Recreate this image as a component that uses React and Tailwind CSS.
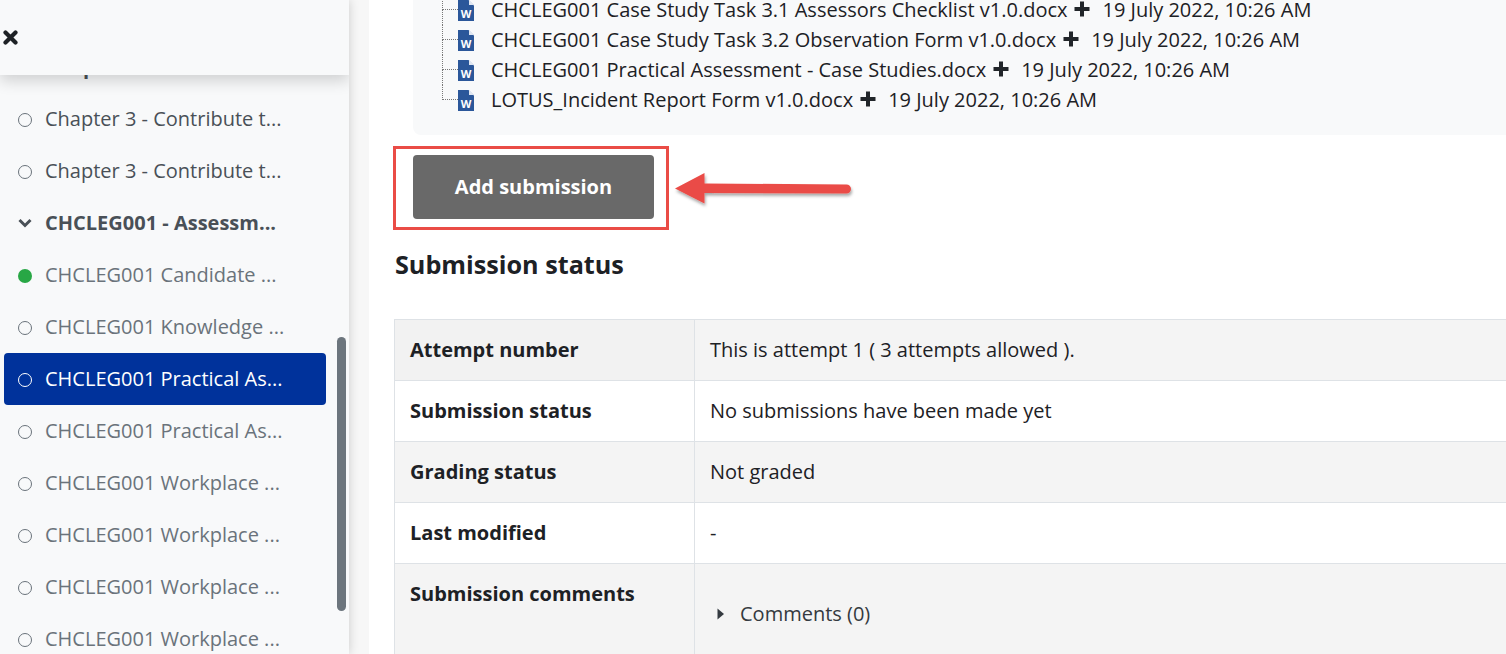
const font = { fontFamily: '"Open Sans", sans-serif' }

const sidebarItems = [
  { label: 'Chapter 3 - Contribute t...', kind: 'hidden' },
  { label: 'Chapter 3 - Contribute t...', kind: 'dark' },
  { label: 'Chapter 3 - Contribute t...', kind: 'dark' },
  { label: 'CHCLEG001 - Assessm...', kind: 'section' },
  { label: 'CHCLEG001 Candidate ...', kind: 'done' },
  { label: 'CHCLEG001 Knowledge ...', kind: 'muted' },
  { label: 'CHCLEG001 Practical As...', kind: 'active' },
  { label: 'CHCLEG001 Practical As...', kind: 'muted' },
  { label: 'CHCLEG001 Workplace ...', kind: 'muted' },
  { label: 'CHCLEG001 Workplace ...', kind: 'muted' },
  { label: 'CHCLEG001 Workplace ...', kind: 'muted' },
  { label: 'CHCLEG001 Workplace ...', kind: 'muted' }
]

const files = [
  { name: 'CHCLEG001 Case Study Task 3.1 Assessors Checklist v1.0.docx' },
  { name: 'CHCLEG001 Case Study Task 3.2 Observation Form v1.0.docx' },
  { name: 'CHCLEG001 Practical Assessment - Case Studies.docx' },
  { name: 'LOTUS_Incident Report Form v1.0.docx', last: true }
]

const statusRows = [
  { label: 'Attempt number', value: 'This is attempt 1 ( 3 attempts allowed ).', bg: 'bg-[#f2f2f2]', valueBg: 'bg-[#f4f4f4]' },
  { label: 'Submission status', value: 'No submissions have been made yet', bg: 'bg-white', valueBg: 'bg-white' },
  { label: 'Grading status', value: 'Not graded', bg: 'bg-[#f4f4f4]', valueBg: 'bg-[#f4f4f4]' },
  { label: 'Last modified', value: '-', bg: 'bg-white', valueBg: 'bg-white' }
]

const ItemIcon = ({ kind }) => {
  if (kind === 'section' || kind === 'hidden') {
    return (
      <svg width="14" height="10" viewBox="0 0 14 10" className="w-[14px] shrink-0">
        <path d="M1.5 2 L7 7.5 L12.5 2" fill="none" stroke="#495057" strokeWidth="3" />
      </svg>
    )
  }
  if (kind === 'done') return <span className="w-[14px] h-[14px] mt-[2px] rounded-full bg-[#28a745] shrink-0" />
  return (
    <span
      className={`w-[14px] h-[14px] mt-[2px] rounded-full border-[1.5px] shrink-0 ${
        kind === 'active' ? 'border-white' : 'border-[#6a737b]'
      }`}
    />
  )
}

const SidebarRow = ({ label, kind }) => {
  const styles = {
    hidden: 'text-[#495057] font-bold',
    dark: 'text-[#495057]',
    section: 'text-[#495057] font-bold',
    done: 'text-[#6a737b]',
    muted: 'text-[#6a737b]',
    active: 'text-white bg-[#00329b] rounded-[4px]'
  }
  return (
    <div className={`flex items-center gap-[13px] h-[52px] w-[322px] ml-1 pl-[14px] text-[20px] whitespace-nowrap ${styles[kind]}`}>
      <ItemIcon kind={kind} />
      <span className="-mt-[1px]">{label}</span>
    </div>
  )
}

const WordIcon = () => (
  <svg width="16" height="21" viewBox="0 0 16 21" className="shrink-0">
    <path d="M0 0 H10.5 L16 5.5 V21 H0 Z" fill="#2b579a" />
    <path d="M11 0 L16 5 H11 Z" fill="#dfe6f1" />
    <text x="8" y="18" textAnchor="middle" fontSize="11" fontWeight="700" fill="#ffffff" fontFamily="Open Sans, sans-serif">
      W
    </text>
  </svg>
)

const PlusIcon = () => (
  <svg width="16" height="16" viewBox="0 0 16 16" className="block shrink-0">
    <path d="M6 0.5 H10 V6 H15.5 V10 H10 V15.5 H6 V10 H0.5 V6 H6 Z" fill="#212529" />
  </svg>
)

const FileRow = ({ name, last }) => (
  <div className="flex items-center h-[30px] whitespace-nowrap leading-[20px]">
    <div className="flex flex-col w-[16px] h-full shrink-0">
      <div className="h-[15px] border-l border-b border-dotted border-[#777]" />
      {!last && <div className="h-[15px] border-l border-dotted border-[#777]" />}
    </div>
    <WordIcon />
    <span className="ml-[17px]">{name}</span>
    <span className="ml-[7px] mr-[12px] -mt-[2px]">
      <PlusIcon />
    </span>
    <span>19 July 2022, 10:26 AM</span>
  </div>
)

const App = () => {
  return (
    <div style={font} className="flex w-[1506px] h-[654px] overflow-hidden bg-white text-[20px] text-[#1d2125]">
      {/* Left drawer */}
      <aside className="relative w-[349px] h-full shrink-0 bg-[#f8f9fa] shadow-[0_0_10px_rgba(0,0,0,0.18)] z-10 overflow-hidden">
        <div className="pt-[41px]">
          {sidebarItems.map((item, i) => (
            <SidebarRow key={i} {...item} />
          ))}
        </div>
        <div className="absolute top-0 left-0 flex items-center w-full h-[75px] pl-[3px] bg-[#f8f9fa] shadow-[0_6px_14px_rgba(0,0,0,0.16)]">
          <svg width="15" height="15" viewBox="0 0 15 15">
            <path d="M2.5 2.5 L12.5 12.5 M12.5 2.5 L2.5 12.5" stroke="#1d2125" strokeWidth="4.2" strokeLinecap="round" />
          </svg>
        </div>
        <div className="absolute left-[337px] top-[337px] w-[9px] h-[274px] rounded-full bg-[#6c757d]" />
      </aside>

      <div className="w-[20px] h-full shrink-0 bg-[#f7f7f7]" />

      {/* Main content */}
      <main className="relative flex-1 min-w-0 pl-[25px]">
        <div className="-mt-[5px] ml-[19px] h-[140px] pl-[29px] bg-[#f8f9fa] rounded-bl-lg">
          {files.map((file) => (
            <FileRow key={file.name} {...file} />
          ))}
        </div>

        <button className="block mt-[20px] ml-[19px] w-[241px] h-[64px] bg-[#696969] rounded-[4px] text-white font-bold text-[20px]">
          Add submission
        </button>

        <h3 className="mt-[26px] ml-[1px] text-[25.2px] leading-[38px] font-bold text-[#1d2125]">Submission status</h3>

        <div className="mt-[36px] w-[1200px] border-l border-t border-[#dee2e6]">
          {statusRows.map((row) => (
            <div key={row.label} className="flex h-[61px] border-b border-[#dee2e6]">
              <div className={`flex items-center w-[300px] shrink-0 pl-[15px] font-bold border-r border-[#dee2e6] ${row.bg}`}>
                {row.label}
              </div>
              <div className={`flex items-center flex-1 pl-[15px] ${row.valueBg}`}>{row.value}</div>
            </div>
          ))}
          <div className="flex h-[120px] bg-[#f4f4f4]">
            <div className="w-[300px] shrink-0 pl-[15px] pt-[15px] font-bold border-r border-[#dee2e6]">Submission comments</div>
            <div className="flex items-start pl-[22px] pt-[35px]">
              <svg width="8" height="12" viewBox="0 0 8 12" className="mt-[9px]">
                <path d="M0.5 0.5 L7 6 L0.5 11.5 Z" fill="#343a40" />
              </svg>
              <span className="ml-[15px] text-[#343a40]">Comments (0)</span>
            </div>
          </div>
        </div>

        {/* Screenshot annotation */}
        <div className="absolute left-[24px] top-[146px] w-[276px] h-[84px] border-[3px] border-[#ea4c46] pointer-events-none" />
        <svg width="190" height="50" viewBox="0 0 190 50" className="absolute left-[300px] top-[165px] pointer-events-none">
          <defs>
            <filter id="arrowShadow" x="-10%" y="-30%" width="120%" height="170%">
              <feDropShadow dx="1" dy="2.5" stdDeviation="1.6" floodColor="#000" floodOpacity="0.35" />
            </filter>
          </defs>
          <path
            d="M6 23.5 L35.5 8 L35.5 18.5 L177.5 19.5 A4.5 4.5 0 0 1 177.5 28.5 L35.5 28 L35.5 38.5 Z"
            fill="#ea4c46"
            filter="url(#arrowShadow)"
          />
        </svg>
      </main>
    </div>
  )
}

export default App
